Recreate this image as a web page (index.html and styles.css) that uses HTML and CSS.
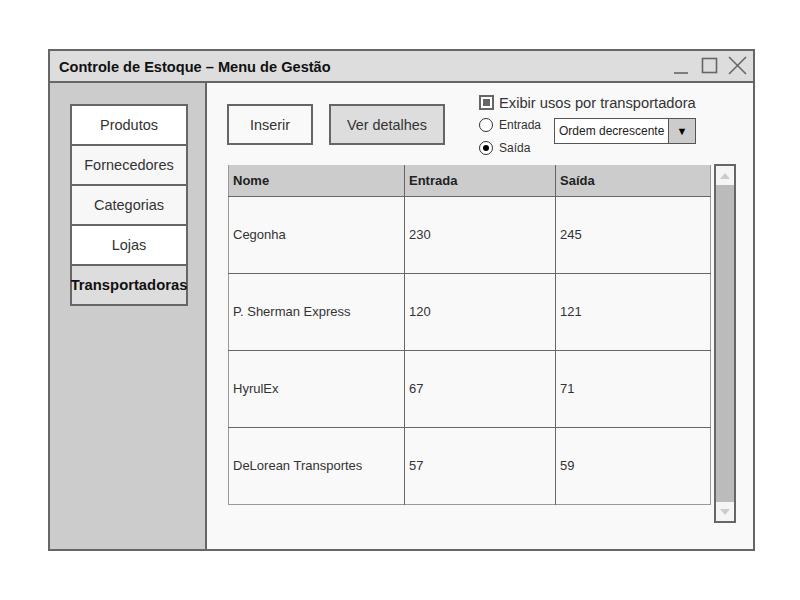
FILE: index.html
```html
<!DOCTYPE html>
<html lang="pt">
<head>
<meta charset="utf-8">
<title>Controle de Estoque</title>
<link rel="stylesheet" href="styles.css">
</head>
<body>
<div class="window">
  <div class="titlebar">
    <span class="title">Controle de Estoque – Menu de Gestão</span>
    <svg class="winctl" width="80" height="30" viewBox="0 0 80 30">
      <line x1="4" y1="22" x2="18" y2="22" stroke="#666" stroke-width="1.6"/>
      <rect x="32.5" y="7.5" width="14" height="14" fill="none" stroke="#666" stroke-width="1.6"/>
      <line x1="59" y1="6" x2="76" y2="23" stroke="#666" stroke-width="1.6"/>
      <line x1="76" y1="6" x2="59" y2="23" stroke="#666" stroke-width="1.6"/>
    </svg>
  </div>
  <div class="body">
    <nav class="sidebar">
      <div class="navbtn white">Produtos</div>
      <div class="navbtn">Fornecedores</div>
      <div class="navbtn">Categorias</div>
      <div class="navbtn white">Lojas</div>
      <div class="navbtn active">Transportadoras</div>
    </nav>
    <main class="content">
      <div class="toprow">
        <div class="btn">Inserir</div>
        <div class="btn grey">Ver detalhes</div>
        <div class="options">
          <div class="checkrow">
            <span class="checkbox"><span class="checkmark"></span></span>
            <span class="checklabel">Exibir usos por transportadora</span>
          </div>
          <div class="optrow">
            <div class="radios">
              <div class="radiorow"><span class="radio"></span><span>Entrada</span></div>
              <div class="radiorow"><span class="radio checked"></span><span>Saída</span></div>
            </div>
            <div class="select">
              <span class="selecttext">Ordem decrescente</span>
              <span class="selectarrow">▼</span>
            </div>
          </div>
        </div>
      </div>
      <div class="tablerow">
        <table class="grid">
          <colgroup>
            <col class="c1"><col class="c2"><col class="c3">
          </colgroup>
          <thead>
            <tr><th>Nome</th><th>Entrada</th><th>Saída</th></tr>
          </thead>
          <tbody>
            <tr><td>Cegonha</td><td>230</td><td>245</td></tr>
            <tr><td>P. Sherman Express</td><td>120</td><td>121</td></tr>
            <tr><td>HyrulEx</td><td>67</td><td>71</td></tr>
            <tr><td>DeLorean Transportes</td><td>57</td><td>59</td></tr>
          </tbody>
        </table>
        <div class="scrollbar">
          <div class="scrollend">
            <svg width="12" height="8" viewBox="0 0 12 8"><polygon points="1,7 11,7 6,1" fill="#ccc"/></svg>
          </div>
          <div class="thumb"></div>
          <div class="scrollend">
            <svg width="12" height="8" viewBox="0 0 12 8"><polygon points="1,1 11,1 6,7" fill="#ccc"/></svg>
          </div>
        </div>
      </div>
    </main>
  </div>
</div>
</body>
</html>
```

FILE: styles.css
```css
* { box-sizing: border-box; }
html, body {
  margin: 0;
  padding: 0;
  background: #fff;
  font-family: "Liberation Sans", Arial, sans-serif;
  color: #333;
}
.window {
  margin: 49px 0 0 48px;
  width: 707px;
  height: 502px;
  border: 2px solid #666;
  display: flex;
  flex-direction: column;
  background: #f9f9f9;
}
.titlebar {
  height: 32px;
  flex: none;
  background: #ddd;
  border-bottom: 2px solid #666;
  display: flex;
  align-items: center;
  padding: 0 3px 0 9px;
}
.title {
  font-size: 14.6px;
  font-weight: bold;
  color: #111;
  margin-top: 1px;
}
.winctl {
  margin-left: auto;
  display: block;
}
.body {
  flex: 1;
  display: flex;
  min-height: 0;
}
.sidebar {
  width: 157px;
  flex: none;
  background: #ccc;
  border-right: 2px solid #666;
  padding: 21px 0 0 20px;
}
.navbtn {
  width: 118px;
  height: 42px;
  border: 2px solid #666;
  background: #f7f7f7;
  font-size: 14.5px;
  color: #333;
  display: flex;
  align-items: center;
  justify-content: center;
  white-space: nowrap;
  margin-top: -2px;
}
.navbtn:first-child { margin-top: 0; }
.navbtn.white { background: #fff; }
.navbtn.active {
  background: #ddd;
  font-weight: bold;
  color: #111;
  font-size: 14.8px;
}
.content {
  flex: 1;
  padding: 11px 0 0 20px;
  display: flex;
  flex-direction: column;
}
.toprow {
  display: flex;
  align-items: flex-start;
}
.btn {
  margin-top: 10px;
  height: 41px;
  border: 2px solid #666;
  background: #f9f9f9;
  font-size: 14.4px;
  color: #333;
  display: flex;
  align-items: center;
  justify-content: center;
}
.btn:first-child { width: 86px; }
.btn.grey {
  width: 116px;
  margin-left: 16px;
  background: #ddd;
}
.options {
  margin-left: 34px;
  display: flex;
  flex-direction: column;
}
.checkrow {
  height: 17px;
  display: flex;
  align-items: center;
}
.checkbox {
  width: 15px;
  height: 15px;
  border: 2px solid #666;
  background: #fff;
  padding: 2px;
  display: block;
}
.checkmark {
  display: block;
  width: 100%;
  height: 100%;
  background: #666;
}
.checklabel {
  margin-left: 5px;
  font-size: 14.7px;
  color: #333;
  white-space: nowrap;
}
.optrow {
  display: flex;
  margin-top: 6px;
}
.radios {
  display: flex;
  flex-direction: column;
  gap: 7px;
  width: 75px;
}
.radiorow {
  height: 16px;
  display: flex;
  align-items: center;
  font-size: 12px;
  color: #333;
}
.radio {
  width: 14px;
  height: 14px;
  border: 1px solid #333;
  border-radius: 50%;
  background: #fff;
  margin-right: 6px;
  display: flex;
  align-items: center;
  justify-content: center;
}
.radio.checked::after {
  content: "";
  width: 6px;
  height: 6px;
  border-radius: 50%;
  background: #000;
}
.select {
  margin-top: 1px;
  width: 142px;
  height: 26px;
  border: 1px solid #555;
  background: #fff;
  display: flex;
}
.selecttext {
  flex: 1;
  font-size: 12px;
  color: #222;
  display: flex;
  align-items: center;
  padding-left: 4px;
  white-space: nowrap;
}
.selectarrow {
  width: 27px;
  background: #ccc;
  border-left: 1px solid #555;
  font-size: 11px;
  color: #000;
  display: flex;
  align-items: center;
  justify-content: center;
}
.tablerow {
  display: flex;
  align-items: flex-start;
  margin-top: 8px;
}
.grid {
  margin-top: 1px;
  margin-left: 1px;
  width: 482px;
  border-collapse: collapse;
  table-layout: fixed;
  border-left: 1px solid #999;
  border-right: 1px solid #999;
  border-bottom: 1px solid #999;
}
.c1 { width: 176px; }
.c2 { width: 151px; }
.c3 { width: 155px; }
.grid th {
  height: 31px;
  background: #ccc;
  text-align: left;
  font-size: 13px;
  font-weight: bold;
  color: #222;
  padding: 0 0 0 4px;
  border-bottom: 1px solid #666;
}
.grid th + th, .grid td + td { border-left: 1px solid #666; }
.grid td {
  height: 77px;
  font-size: 13px;
  color: #333;
  padding: 0 0 0 4px;
  border-top: 1px solid #666;
  vertical-align: middle;
}
.grid tbody tr:first-child td { border-top: none; }
.scrollbar {
  margin-left: 3px;
  width: 22px;
  height: 359px;
  border: 2px solid #666;
  background: #f5f5f5;
  display: flex;
  flex-direction: column;
}
.scrollend {
  height: 19px;
  display: flex;
  align-items: center;
  justify-content: center;
}
.scrollend svg { display: block; }
.thumb {
  flex: 1;
  background: #bbb;
}
```
